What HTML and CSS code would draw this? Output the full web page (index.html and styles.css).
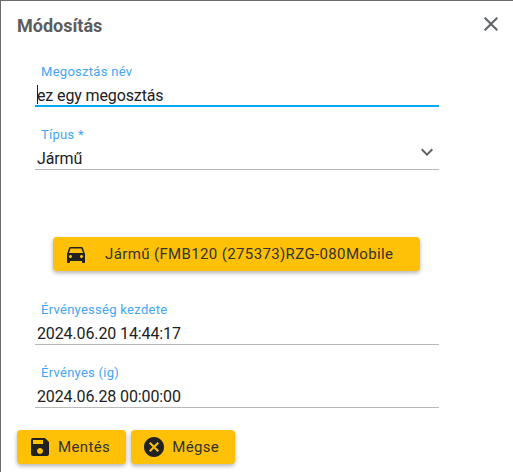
FILE: index.html
```html
<!DOCTYPE html>
<html lang="hu">
<head>
    <meta charset="UTF-8">
    <title>Módosítás</title>
    <link rel="stylesheet" href="styles.css">
</head>
<body>
    <div class="dialog">
        <div class="dialog-head">
            <h1>Módosítás</h1>
            <svg class="close" width="24" height="24" viewBox="0 0 24 24"><path d="M19 6.41 17.59 5 12 10.59 6.41 5 5 6.41 10.59 12 5 17.59 6.41 19 12 13.41 17.59 19 19 17.59 13.41 12z"/></svg>
        </div>

        <div class="form">
            <div class="field field-active">
                <label>Megosztás név</label>
                <div class="value"><span class="caret"></span>ez egy megosztás</div>
            </div>

            <div class="field field-select">
                <label>Típus *</label>
                <div class="value">Jármű</div>
                <svg class="chevron" width="24" height="24" viewBox="0 0 24 24"><path d="M7.41 8.59 12 13.17l4.59-4.58L18 10l-6 6-6-6z"/></svg>
            </div>

            <button class="btn btn-wide">
                <svg width="24" height="24" viewBox="0 0 24 24"><path d="M18.92 6.01C18.72 5.42 18.16 5 17.5 5h-11c-.66 0-1.21.42-1.42 1.01L3 12v8c0 .55.45 1 1 1h1c.55 0 1-.45 1-1v-1h12v1c0 .55.45 1 1 1h1c.55 0 1-.45 1-1v-8l-2.08-5.99zM6.5 16c-.83 0-1.5-.67-1.5-1.5S5.67 13 6.5 13s1.5.67 1.5 1.5S7.33 16 6.5 16zm11 0c-.83 0-1.5-.67-1.5-1.5s.67-1.5 1.5-1.5 1.5.67 1.5 1.5-.67 1.5-1.5 1.5zM5 11l1.5-4.5h11L19 11H5z"/></svg>
                <span>Jármű (FMB120 (275373)RZG-080Mobile</span>
            </button>

            <div class="field field-date">
                <label>Érvényesség kezdete</label>
                <div class="value">2024.06.20 14:44:17</div>
            </div>

            <div class="field field-date">
                <label>Érvényes (ig)</label>
                <div class="value">2024.06.28 00:00:00</div>
            </div>
        </div>

        <div class="actions">
            <button class="btn">
                <svg width="24" height="24" viewBox="0 0 24 24"><path d="M17 3H5c-1.11 0-2 .9-2 2v14c0 1.1.89 2 2 2h14c1.1 0 2-.9 2-2V7l-4-4zm-5 16c-1.66 0-3-1.34-3-3s1.34-3 3-3 3 1.34 3 3-1.34 3-3 3zm3-10H5V5h10v4z"/></svg>
                <span>Mentés</span>
            </button>
            <button class="btn">
                <svg width="24" height="24" viewBox="0 0 24 24"><path d="M12 2C6.47 2 2 6.47 2 12s4.47 10 10 10 10-4.47 10-10S17.53 2 12 2zm5 13.59L15.59 17 12 13.41 8.41 17 7 15.59 10.59 12 7 8.41 8.41 7 12 10.59 15.59 7 17 8.41 13.41 12 17 15.59z"/></svg>
                <span>Mégse</span>
            </button>
        </div>
    </div>
</body>
</html>
```

FILE: styles.css
```css
* {
    margin: 0;
    padding: 0;
    box-sizing: border-box;
}

body {
    font-family: Roboto, sans-serif;
    background: white;
    color: #212121;
    height: 472px;
    overflow: hidden;
}

.dialog {
    height: 472px;
    border-top: 1px solid #6b6b6b;
    border-left: 1px solid #6b6b6b;
}

.dialog-head {
    display: flex;
    align-items: center;
    justify-content: space-between;
    height: 46px;
    padding: 2px 10px 0 16px;
}

h1 {
    font-size: 18px;
    font-weight: 700;
    color: #5c5c5c;
}

.close {
    fill: #5f6368;
    margin-top: -2px;
}

.form {
    width: 404px;
    margin-left: 34px;
    padding-top: 16px;
}

.field {
    position: relative;
    height: 44px;
    padding-top: 1px;
    border-bottom: 1px solid #b9b9b9;
}

.field label {
    display: block;
    padding-left: 6px;
    font-size: 13px;
    line-height: 16px;
    letter-spacing: 0.28px;
    color: #42a5f5;
}

.value {
    padding-left: 2px;
    margin-top: 5px;
    font-size: 16px;
    line-height: 22px;
    letter-spacing: -0.12px;
}

.field-active {
    border-bottom: 2px solid #03a9f4;
}

.field-active .value {
    position: relative;
}

.caret {
    position: absolute;
    left: 2px;
    top: 0;
    width: 1px;
    height: 19px;
    background: #212121;
}

.field-select {
    margin-top: 19px;
}

.field-select .chevron {
    position: absolute;
    right: 0;
    top: 14px;
    fill: #5f6368;
}

.field-date {
    margin-bottom: 19px;
}

.btn {
    display: inline-flex;
    align-items: center;
    height: 34px;
    border: none;
    border-radius: 4px;
    background: #ffc107;
    color: #333;
    font-family: Roboto, sans-serif;
    font-size: 15px;
    letter-spacing: 0.37px;
    padding: 0 16px 0 11px;
    gap: 6px;
    box-shadow: 0 2px 4px rgba(0, 0, 0, 0.3);
}

.btn svg {
    fill: #212121;
}

.btn-wide {
    display: flex;
    width: 367px;
    margin: 67px 0 30px 18px;
    padding-left: 11px;
    gap: 17px;
}

.actions {
    display: flex;
    gap: 5px;
    margin: 22px 0 0 16px;
}
```
